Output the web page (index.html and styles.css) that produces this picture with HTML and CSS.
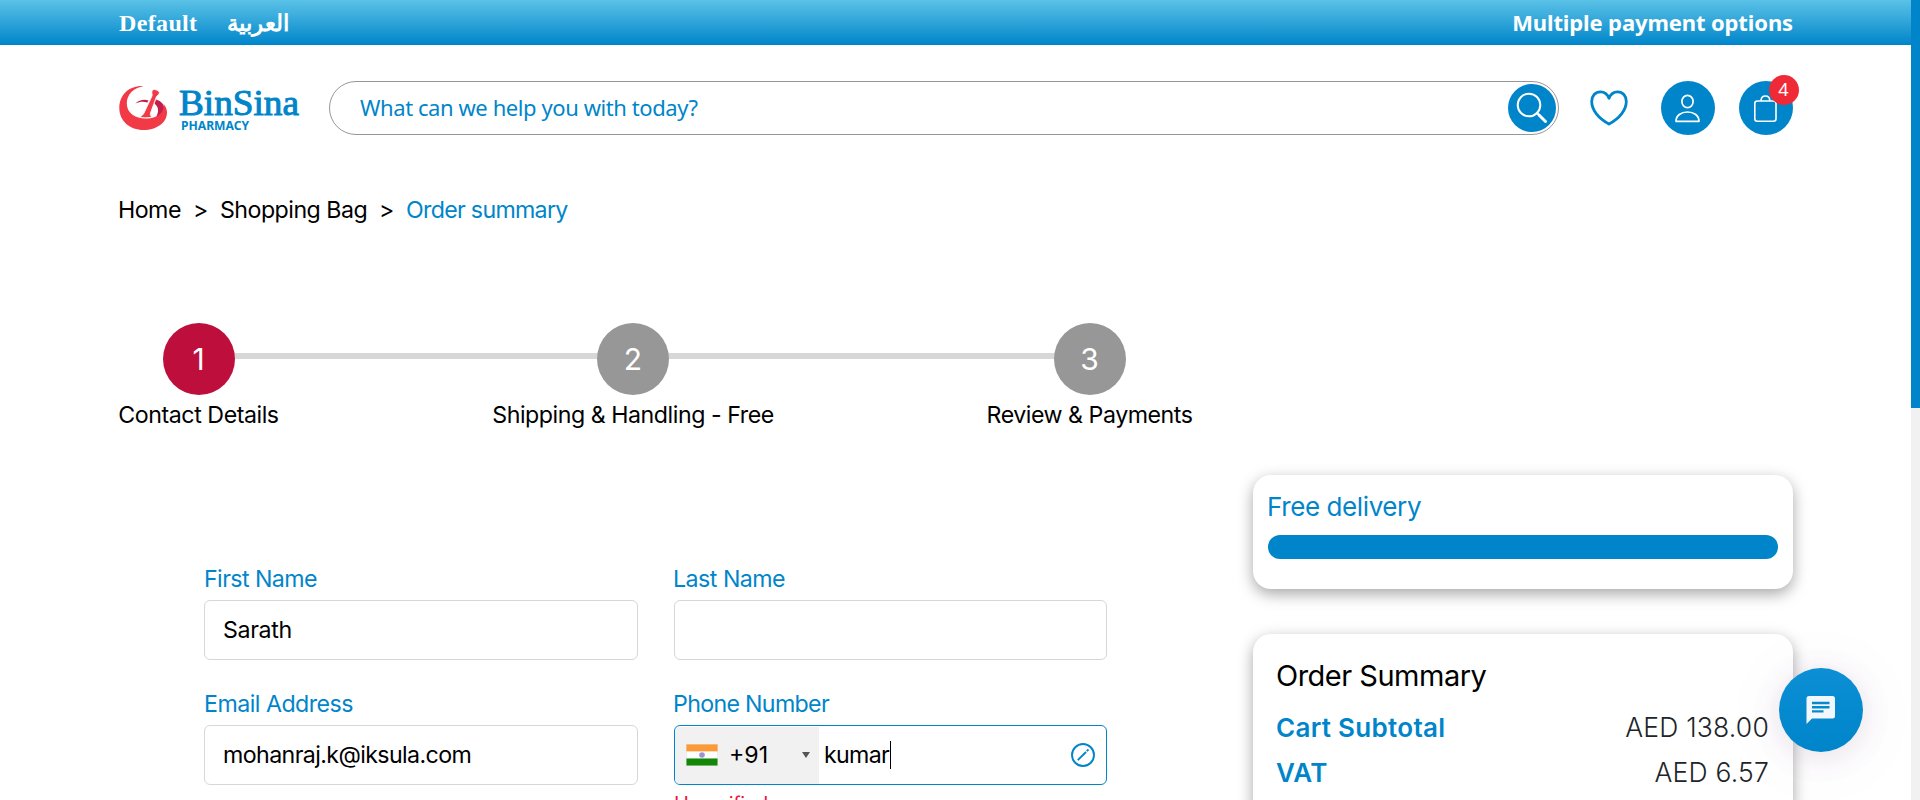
FILE: index.html
```
<!DOCTYPE html>
<html lang="en">
<head>
<meta charset="utf-8">
<title>BinSina Pharmacy - Order summary</title>
<link rel="stylesheet" href="styles.css">
</head>
<body>
<div class="page">
  <div class="topbar">
    <nav class="languages"><a class="lang-default">Default</a><a class="lang-arabic" lang="ar">العربية</a></nav>
    <span class="promo">Multiple payment options</span>
  </div>

  <header class="header">
    <svg class="logo" width="182" height="54" viewBox="0 0 182 54">
      <path fill="#c41e4a" d="M16.500 22.500C20 19 25 18 29.500 19.500L28.300 21.500C24.500 20.300 20.500 20.600 16.500 22.500zM37 18.500C42.500 20 46 24 45 29.500 44 33 41 35 37 36 40 31 40 26 35.500 22.500z"/>
      <path fill="#f23a46" d="M24 5C10 4.500 .3 14 .3 27 .3 40 11 49 24.500 49 38 49 48 41.500 48 31.500 48 28 46.500 25 44.500 23 46 31 39 37.500 27.500 37.500 15.500 37.500 7.800 31.500 7.800 22.500 7.800 14 14 7 24 5.300z"/>
      <path fill="#f23a46" stroke="#fff" stroke-width=".8" d="M32.800 11C33 8.500 35 7.800 37.500 9 40 10 41 11.500 40 13 39.300 14 38 14.500 37.300 16L31.500 32C31 34 31.800 35 33 36 29 37 24 37 20.500 36 22.500 35 24 34 25 32L33 15C33.500 13.500 32.700 12.500 32.800 11z"/>
      <text class="logo-name" x="60" y="34" textLength="120" lengthAdjust="spacingAndGlyphs">BinSina</text>
      <text class="logo-sub" x="62" y="49" textLength="68" lengthAdjust="spacingAndGlyphs">PHARMACY</text>
    </svg>
    <div class="search">
      <span class="search-text">What can we help you with today?</span>
      <span class="search-button">
        <svg width="48" height="48" viewBox="0 0 48 48"><g fill="none" stroke="#fff" stroke-linecap="round"><circle cx="21" cy="21" r="11.300" stroke-width="2"/><path stroke-width="2.200" d="M29 29l2 2"/><path stroke-width="3" d="M31 31l6.500 6.500"/></g></svg>
      </span>
    </div>
    <svg class="heart" width="38" height="36" viewBox="0 0 38 36"><path fill="none" stroke="#0085ca" stroke-width="2.800" stroke-linejoin="round" d="M19 8.200C17.300 4 14 1.800 10.500 1.800 5.300 1.800 1.700 5.800 1.700 11.500 1.700 20 8.500 28.500 19 34 29.500 28.500 36.300 20 36.300 11.500 36.300 5.800 32.700 1.800 27.500 1.800 24 1.800 20.700 4 19 8.200z"/></svg>
    <span class="round-button account">
      <svg width="54" height="54" viewBox="0 0 54 54"><g fill="none" stroke="#fff" stroke-width="1.700"><ellipse cx="26.500" cy="20.500" rx="5.600" ry="6.200"/><path stroke-linejoin="round" d="M15 40.300C15 34.500 20 31 26.500 31S38 34.500 38 40.300z"/></g></svg>
    </span>
    <span class="round-button bag">
      <svg width="54" height="54" viewBox="0 0 54 54"><g fill="none" stroke="#fff" stroke-width="1.600"><rect x="15.800" y="20" width="21.200" height="20.200" rx="2.500"/><path d="M22 20c0-3.500 2-5 4.400-5s4.400 1.500 4.400 5"/></g></svg>
      <span class="badge">4</span>
    </span>
  </header>

  <nav class="breadcrumb">
    <a class="crumb-home">Home</a><span class="sep">&gt;</span><a class="crumb-bag">Shopping Bag</a><span class="sep">&gt;</span><span class="current">Order summary</span>
  </nav>

  <ol class="steps">
    <li class="step step-contact active"><span class="dot">1</span><span>Contact Details</span></li>
    <li class="step step-shipping"><span class="dot">2</span><span>Shipping &amp; Handling - Free</span></li>
    <li class="step step-review"><span class="dot">3</span><span>Review &amp; Payments</span></li>
  </ol>

  <main class="content">
    <form class="form">
      <div class="field"><label class="label-first">First Name</label><div class="input">Sarath</div></div>
      <div class="field"><label class="label-last">Last Name</label><div class="input"></div></div>
      <div class="field"><label class="label-email">Email Address</label><div class="input email">mohanraj.k@iksula.com</div></div>
      <div class="field">
        <label class="label-phone">Phone Number</label>
        <div class="input phone">
          <span class="country">
            <svg width="32" height="22" viewBox="0 0 32 22"><rect width="32" height="22" fill="#ddd"/><path fill="#f93" d="M.5.5h31v7H.5z"/><path fill="#fff" d="M.5 7.500h31v7H.500z"/><path fill="#138808" d="M.5 14.500h31v7H.500z"/><circle cx="16" cy="11" r="2.800" fill="#9a94d2"/></svg>
            <span class="code">+91</span>
            <span class="arrow"></span>
          </span>
          <span class="number">kumar</span><span class="caret"></span>
          <svg class="status" width="24" height="24" viewBox="0 0 24 24"><g fill="none" stroke="#0085ca" stroke-width="1.900"><circle cx="12" cy="12" r="11"/><path d="M6.800 17.200L15 9M15.800 8.200L17.500 6.500"/></g></svg>
        </div>
        <div class="error">Unverified</div>
      </div>
    </form>

    <aside class="sidebar">
      <section class="card delivery">
        <div class="delivery-title">Free delivery</div>
        <div class="progress"></div>
      </section>
      <section class="card summary">
        <h2>Order Summary</h2>
        <div class="row"><b class="subtotal">Cart Subtotal</b><span>AED 138.00</span></div>
        <div class="row"><b>VAT</b><span>AED 6.57</span></div>
      </section>
    </aside>
  </main>
</div>
<div class="scrollbar"><div class="thumb"></div></div>
<div class="chat">
  <svg width="30" height="28" viewBox="0 0 30 28"><path fill="#f0f8fd" d="M3 0h23.500a2.500 2.500 0 0 1 2.500 2.500v17.500a2.500 2.500 0 0 1-2.500 2.500H6L.500 28V2.500A2.500 2.500 0 0 1 3 0z"/><path stroke="#0888cd" stroke-width="2.400" d="M6 7h17.500M6 11.200h17.500M6 15.400h11.500"/></svg>
</div>
</body>
</html>
```
FILE: styles.css
```
* { box-sizing: border-box; }
body {
  margin: 0;
  height: 800px;
  display: flex;
  overflow: hidden;
  background: #fff;
  color: #000;
  font: 400 23.2px/30px Inter, sans-serif;
  letter-spacing: -0.52px;
  white-space: nowrap;
}
.page { width: 1911px; height: 800px; overflow: hidden; }
.scrollbar { width: 9px; background: #f1f1f1; }
.thumb { height: 408px; background: #0085ca; }

.topbar {
  height: 45px;
  padding: 0 118px 0 119px;
  display: flex;
  justify-content: space-between;
  background: linear-gradient(#5bc2e7, #0085ca);
  color: #fff;
  font-weight: 700;
  line-height: 47px;
}
.languages { display: flex; gap: 30px; }
.lang-default { font-family: "Liberation Serif", serif; font-size: 24px; letter-spacing: 0.35px; }
.lang-arabic { font-family: "Noto Sans", sans-serif; font-size: 22.5px; line-height: 45px; letter-spacing: 0; }
.promo { font-family: "Noto Sans", sans-serif; font-size: 22px; line-height: 45px; letter-spacing: -0.12px; }

.header { display: flex; align-items: center; height: 54px; margin: 36px 118px 0 119px; }
.logo { margin-right: 28px; }
.logo-name { font: 400 36px "Liberation Serif", serif; fill: #0085ca; stroke: #0085ca; stroke-width: 1; letter-spacing: 0; }
.logo-sub { font: 700 12.8px "Noto Sans", sans-serif; fill: #0085ca; letter-spacing: 0; }
.search {
  width: 1230px;
  height: 54px;
  padding: 0 2px 0 30px;
  display: flex;
  align-items: center;
  justify-content: space-between;
  border: 1px solid #979797;
  border-radius: 27px;
}
.search-text { padding-bottom: 2px; color: #0085ca; font: 400 22px/50px "Noto Sans", sans-serif; letter-spacing: -0.42px; }
.search-button { height: 48px; border-radius: 50%; background: #0085ca; }
.search-button svg, .round-button svg { display: block; }
.heart { margin: 0 33px 0 31px; }
.round-button { position: relative; width: 54px; height: 54px; border-radius: 50%; background: #0085ca; }
.bag { margin-left: 24px; }
.badge {
  position: absolute;
  top: -6px;
  right: -6px;
  width: 30px;
  height: 30px;
  border-radius: 50%;
  background: #f02937;
  color: #fff;
  font: 400 18px/29px "Noto Sans", sans-serif;
  letter-spacing: 0;
  text-align: center;
  padding-right: 1px;
}

.breadcrumb { display: flex; height: 30px; margin: 60px 0 0 118px; }
.breadcrumb .sep { width: 39px; text-align: center; }
.crumb-home { width: 63px; }
.crumb-bag { width: 147px; }
.current { color: #0085ca; letter-spacing: -0.7px; }

.steps {
  position: relative;
  width: 1074px;
  height: 107px;
  margin: 98px 0 0 118px;
  padding: 0;
  display: flex;
  justify-content: space-between;
  list-style: none;
}
.steps::before { content: ""; position: absolute; left: 81px; top: 30px; width: 890px; height: 6px; background: #d7d7d7; }
.step { position: relative; display: flex; flex-direction: column; align-items: center; gap: 5px; }
.step-contact { width: 161px; letter-spacing: -0.45px; }
.step-shipping { width: 281px; letter-spacing: -0.46px; }
.step-review { width: 205px; letter-spacing: -0.48px; }
.dot {
  width: 72px;
  height: 72px;
  border-radius: 50%;
  background: #979797;
  color: #fff;
  font-size: 30px;
  line-height: 72px;
  text-align: center;
  letter-spacing: 0;
}
.active .dot { background: #be0e3c; }

.content { display: flex; height: 370px; }
.form {
  width: 903px;
  margin: 134px 0 0 204px;
  display: grid;
  grid-template-columns: 434px 433px;
  gap: 29px 36px;
  align-content: start;
}
.field { height: 96px; }
.field label { display: block; height: 36px; color: #0085ca; }
.label-first { letter-spacing: -0.58px; }
.label-phone { letter-spacing: -0.68px; }
.label-last, .label-phone { margin-left: -1px; }
.input { height: 60px; padding-left: 18px; line-height: 58px; letter-spacing: -0.37px; border: 1px solid #d7d7d7; border-radius: 6px; }
.email { letter-spacing: -0.6px; }
.phone { padding: 0 11px 0 0; display: flex; align-items: center; border-color: #0085ca; }
.country { width: 144px; height: 57px; padding-left: 11px; display: flex; align-items: center; background: #f1f1f1; border-radius: 5px 0 0 5px; }
.code { width: 38px; margin-left: 11px; letter-spacing: 0; }
.arrow { margin-left: 35px; border: 4px solid transparent; border-top: 6px solid #555; border-bottom: 0; }
.number { margin-left: 5px; letter-spacing: -0.7px; }
.caret { width: 1px; height: 28px; margin-left: 1px; background: #000; }
.status { margin-left: auto; }
.error { margin-top: 7px; color: #f0143c; font-size: 20px; line-height: 24px; letter-spacing: -0.4px; }

.sidebar { margin: 45px 0 0 146px; width: 540px; display: flex; flex-direction: column; gap: 45px; }
.card { flex: none; background: #fff; border-radius: 18px; box-shadow: 0 5px 15px rgba(0, 0, 0, 0.35); }
.delivery { height: 114px; padding: 15px; color: #0085ca; }
.delivery-title { margin-left: -1px; font-size: 26px; line-height: 33px; letter-spacing: -0.4px; }
.progress { height: 24px; margin-top: 12px; border-radius: 12px; background: #0085ca; }
.summary { height: 300px; padding: 22px 24px; }
.summary h2 { margin: 0 0 9px -1px; font-size: 29px; font-weight: 400; line-height: 40px; letter-spacing: -0.5px; }
.row { display: flex; justify-content: space-between; line-height: 45px; }
.row b { margin-left: -1px; color: #0085ca; font-size: 26px; font-weight: 600; letter-spacing: 0.3px; }
.row span { color: #212529; font-size: 26.5px; font-weight: 300; letter-spacing: 0.2px; }

.chat {
  position: absolute;
  left: 1779px;
  top: 668px;
  width: 84px;
  height: 84px;
  display: flex;
  align-items: center;
  justify-content: center;
  border-radius: 50%;
  background: linear-gradient(#0c8fd4, #0085ca);
  box-shadow: 0 4px 30px rgba(90, 50, 110, 0.13), 0 6px 80px rgba(90, 50, 110, 0.05);
}
```
